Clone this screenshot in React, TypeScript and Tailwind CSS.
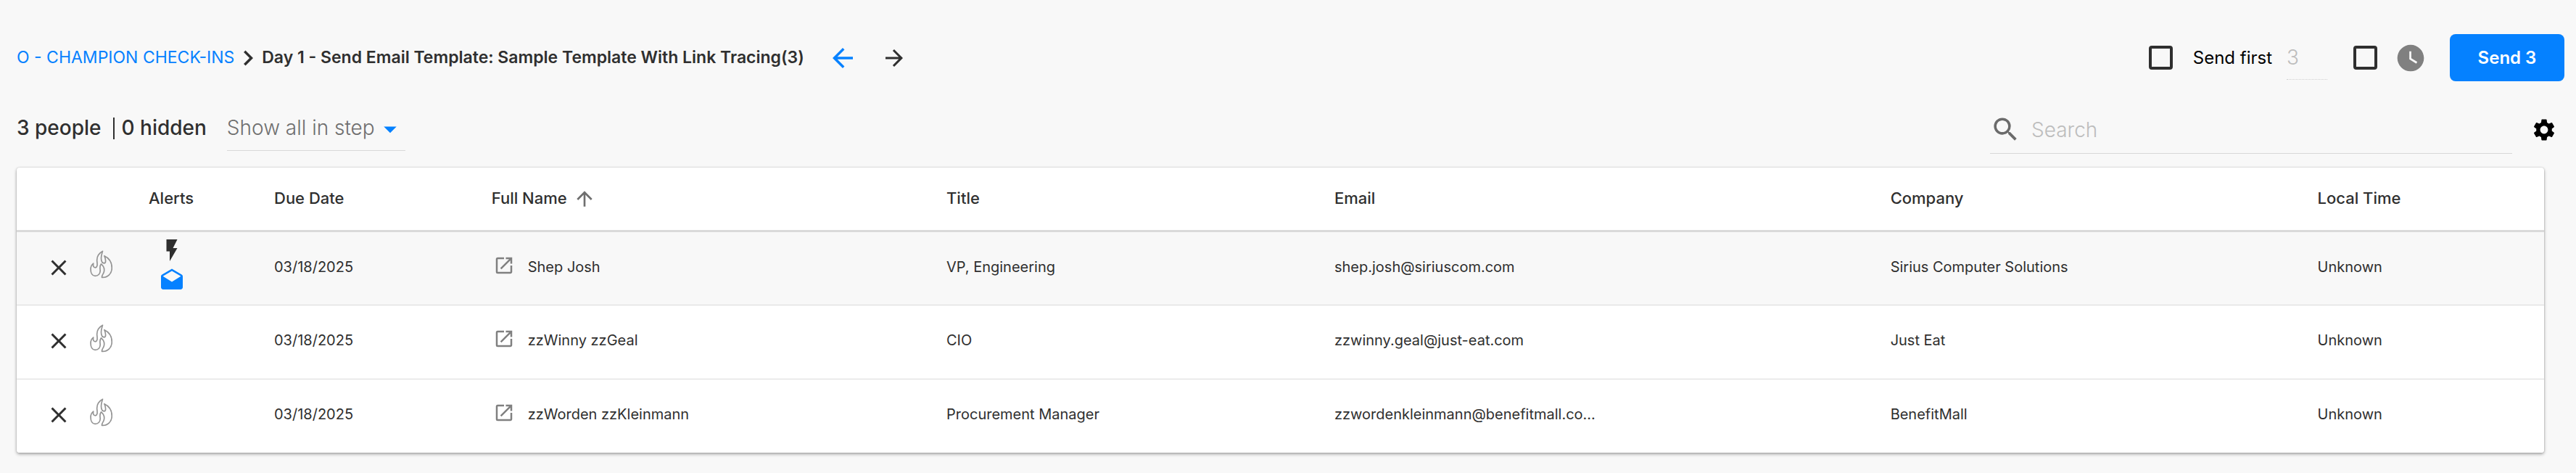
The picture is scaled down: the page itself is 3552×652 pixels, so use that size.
import {
  MdArrowBack,
  MdArrowDropDown,
  MdArrowForward,
  MdArrowUpward,
  MdChevronRight,
  MdClose,
  MdDrafts,
  MdFlashOn,
  MdOpenInNew,
  MdSearch,
  MdSettings,
  MdWatchLater,
} from "react-icons/md";

const columns = [
  { label: "", width: "w-[158px]" },
  { label: "Alerts", width: "w-[173px]" },
  { label: "Due Date", width: "w-[8.6%]" },
  { label: "Full Name", width: "w-[18%]", sorted: true },
  { label: "Title", width: "w-[15.35%]" },
  { label: "Email", width: "w-[22%]" },
  { label: "Company", width: "w-[16.9%]" },
  { label: "Local Time", width: "" },
];

const people = [
  {
    name: "Shep Josh",
    dueDate: "03/18/2025",
    title: "VP, Engineering",
    email: "shep.josh@siriuscom.com",
    company: "Sirius Computer Solutions",
    localTime: "Unknown",
    alerts: true,
  },
  {
    name: "zzWinny zzGeal",
    dueDate: "03/18/2025",
    title: "CIO",
    email: "zzwinny.geal@just-eat.com",
    company: "Just Eat",
    localTime: "Unknown",
    alerts: false,
  },
  {
    name: "zzWorden zzKleinmann",
    dueDate: "03/18/2025",
    title: "Procurement Manager",
    email: "zzwordenkleinmann@benefitmall.co...",
    company: "BenefitMall",
    localTime: "Unknown",
    alerts: false,
  },
];

function FlameIcon() {
  return (
    <svg viewBox="0 0 92 116" className="w-[31px] h-[39px]" fill="none" stroke="currentColor" strokeWidth="5" strokeLinejoin="round">
      <path d="M52 4C34 14 27 28 29 46C31 62 30 70 22 71C14 71 12 64 14 54C6 60 3 68 3 78C3 94 10 105 21 105C34 105 43 96 42 82C41 70 39 64 46 56C56 64 60 74 58 86C57 97 48 100 49 111C72 113 90 96 90 72C90 48 78 32 59 23C66 38 66 52 59 53C50 53 46 44 46 32C46 20 49 14 52 4Z" />
    </svg>
  );
}

function Header() {
  return (
    <header className="flex items-center justify-between">
      <div className="flex items-center text-[23px]">
        <a href="#champion" className="text-[#0581ff]">
          O - CHAMPION CHECK-INS
        </a>
        <MdChevronRight className="-mx-[2px] size-[42px]" />
        <h1 className="font-semibold">
          Day 1 - Send Email Template: Sample Template With Link Tracing(3)
        </h1>
        <button aria-label="Previous step" className="ml-8 text-[#0581ff]">
          <MdArrowBack className="size-[42px]" />
        </button>
        <button aria-label="Next step" className="ml-8">
          <MdArrowForward className="size-9" />
        </button>
      </div>

      <div className="flex items-center">
        <input
          id="send-first"
          type="checkbox"
          className="appearance-none size-[33px] border-4 border-[#2f2f2f] rounded-sm"
        />
        <label htmlFor="send-first" className="ml-7 text-black">
          Send first
        </label>
        <input
          aria-label="Number to send"
          placeholder="3"
          className="ml-5 w-14 h-[60px] border-b border-dotted border-[#cfcfcf] text-[28px] font-light placeholder:text-[#bdbdbd] outline-none"
        />
        <input
          aria-label="Schedule send"
          type="checkbox"
          className="ml-9 appearance-none size-[33px] border-4 border-[#2f2f2f] rounded-sm"
        />
        <MdWatchLater className="ml-6 size-11 text-[#808080]" />
        <button className="ml-8 w-[158px] h-[65px] rounded-lg bg-[#0581ff] text-white font-semibold">
          Send 3
        </button>
      </div>
    </header>
  );
}

function Toolbar() {
  return (
    <div className="mt-[34px] flex items-center justify-between">
      <div className="flex items-center text-[28px] font-medium">
        <div className="flex items-center pb-1">
          <span>3 people</span>
          <span className="ml-4 w-[2px] h-[30px] bg-[#2f2f2f]" />
          <span className="ml-[10px]">0 hidden</span>
        </div>
        <div className="relative ml-7 border-b border-[#d8d8d8]">
          <select
            aria-label="Filter people"
            className="appearance-none w-[246px] h-14 pb-1 text-[28px] font-light text-[#6f6f6f] outline-none"
          >
            <option>Show all in step</option>
          </select>
          <MdArrowDropDown className="absolute right-0 top-[6px] size-[42px] text-[#0581ff] pointer-events-none" />
        </div>
      </div>

      <div className="flex items-center gap-4">
        <div className="flex items-center w-[720px] h-[66px] border-b border-[#d8d8d8]">
          <MdSearch className="size-[43px] shrink-0 text-[#6b6b6b]" />
          <input
            aria-label="Search"
            placeholder="Search"
            className="ml-[14px] pt-[2px] flex-1 text-[28px] font-light placeholder:text-[#bdbdbd] outline-none"
          />
        </div>
        <button aria-label="Settings" className="flex justify-center w-14 text-black">
          <MdSettings className="size-9" />
        </button>
      </div>
    </div>
  );
}

function PeopleTable() {
  return (
    <div className="mt-[19px] mr-7 bg-white rounded-sm overflow-hidden shadow-[0_2px_4px_rgba(0,0,0,0.35),0_0_2px_rgba(0,0,0,0.2)]">
      <table className="w-full table-fixed border-collapse text-left text-xl">
        <thead>
          <tr className="h-[87px] border-b-3 border-[#dadada] text-[22px]">
            {columns.map((column, index) => (
              <th key={index} className={`${column.width} pl-6 font-medium`}>
                <span className="flex items-center gap-2">
                  {column.label}
                  {column.sorted && <MdArrowUpward className="size-8 text-[#6f6f6f]" />}
                </span>
              </th>
            ))}
          </tr>
        </thead>
        <tbody>
          {people.map((person) => (
            <tr
              key={person.name}
              className={`h-[102px] border-b border-[#dadada] last:border-b-0 ${person.alerts ? "bg-[#f8f8f8]" : "bg-white"}`}
            >
              <td className="pl-10 pb-[2px]">
                <div className="flex items-center gap-[25px]">
                  <button aria-label="Remove">
                    <MdClose className="size-9" />
                  </button>
                  <button aria-label="Mark hot" className="pb-2 text-[#949494]">
                    <FlameIcon />
                  </button>
                </div>
              </td>
              <td className="pl-6 pb-2">
                {person.alerts && (
                  <div className="flex flex-col items-center gap-[6px] w-16">
                    <MdFlashOn className="size-9" />
                    <MdDrafts className="size-9 text-[#0581ff]" />
                  </div>
                )}
              </td>
              <td className="pl-6 pb-1">{person.dueDate}</td>
              <td className="pl-6 pb-1">
                <div className="flex items-center gap-[18px]">
                  <button aria-label="Open profile" className="ml-[2px] pb-1 text-[#808080]">
                    <MdOpenInNew className="size-[30px]" />
                  </button>
                  {person.name}
                </div>
              </td>
              <td className="pl-6 pb-1">{person.title}</td>
              <td className="pl-6 pb-1">{person.email}</td>
              <td className="pl-6 pb-1">{person.company}</td>
              <td className="pl-6 pb-1">{person.localTime}</td>
            </tr>
          ))}
        </tbody>
      </table>
    </div>
  );
}

export default function App() {
  return (
    <div className="min-h-screen bg-[#f8f8f8] pt-[47px] pl-[23px] pr-4 pb-7 font-[Inter,sans-serif] text-2xl text-[#2f2f2f]">
      <Header />
      <Toolbar />
      <PeopleTable />
    </div>
  );
}
